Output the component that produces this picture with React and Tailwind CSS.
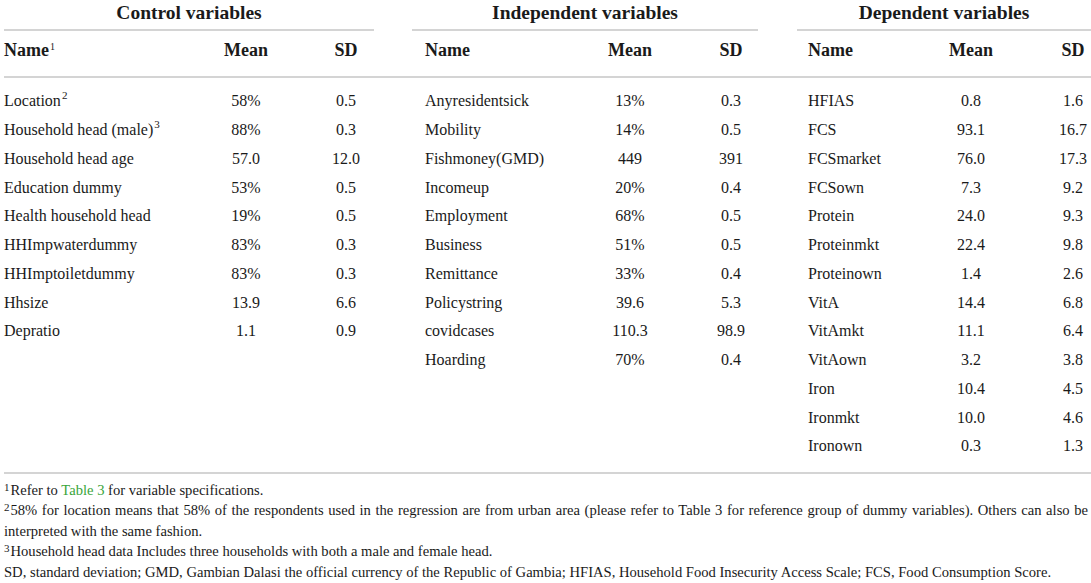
import React from "react";

const control = [
  ["Location", "58%", "0.5", "2"],
  ["Household head (male)", "88%", "0.3", "3"],
  ["Household head age", "57.0", "12.0"],
  ["Education dummy", "53%", "0.5"],
  ["Health household head", "19%", "0.5"],
  ["HHImpwaterdummy", "83%", "0.3"],
  ["HHImptoiletdummy", "83%", "0.3"],
  ["Hhsize", "13.9", "6.6"],
  ["Depratio", "1.1", "0.9"],
];

const independent = [
  ["Anyresidentsick", "13%", "0.3"],
  ["Mobility", "14%", "0.5"],
  ["Fishmoney(GMD)", "449", "391"],
  ["Incomeup", "20%", "0.4"],
  ["Employment", "68%", "0.5"],
  ["Business", "51%", "0.5"],
  ["Remittance", "33%", "0.4"],
  ["Policystring", "39.6", "5.3"],
  ["covidcases", "110.3", "98.9"],
  ["Hoarding", "70%", "0.4"],
];

const dependent = [
  ["HFIAS", "0.8", "1.6"],
  ["FCS", "93.1", "16.7"],
  ["FCSmarket", "76.0", "17.3"],
  ["FCSown", "7.3", "9.2"],
  ["Protein", "24.0", "9.3"],
  ["Proteinmkt", "22.4", "9.8"],
  ["Proteinown", "1.4", "2.6"],
  ["VitA", "14.4", "6.8"],
  ["VitAmkt", "11.1", "6.4"],
  ["VitAown", "3.2", "3.8"],
  ["Iron", "10.4", "4.5"],
  ["Ironmkt", "10.0", "4.6"],
  ["Ironown", "0.3", "1.3"],
];

const GRID =
  "grid grid-cols-[192px_100px_100px_184px_100px_102px_139px_100px_70px]";

function Group({ row, namePad, lastSd }) {
  const name = row ? row[0] : "";
  const sup = row ? row[3] : null;
  return (
    <>
      <div className={`h-[28.75px] flex items-center whitespace-nowrap ${namePad}`}>
        {name}
        {sup && <sup className="text-[11px] -top-[6px] ml-[1px]">{sup}</sup>}
      </div>
      <div className="h-[28.75px] flex items-center justify-center">{row ? row[1] : ""}</div>
      <div className={`h-[28.75px] flex items-center justify-center ${lastSd ? "pl-[34px]" : ""}`}>
        {row ? row[2] : ""}
      </div>
    </>
  );
}

export default function App() {
  const rows = Array.from({ length: 13 }, (_, i) => i);
  return (
    <div
      className="w-[1091px] h-[583px] bg-white text-[#1a1a1a] overflow-hidden"
      style={{ fontFamily: '"Liberation Serif", "Times New Roman", serif' }}
    >
      {/* group titles */}
      <div className="flex pl-[4px] text-[19.5px] font-bold">
        <div className="w-[370px] h-[31px] border-b-2 border-[#d4d4d4] text-center leading-[26px]">
          Control variables
        </div>
        <div className="ml-[38px] w-[346px] h-[31px] border-b-2 border-[#d4d4d4] text-center leading-[26px]">
          Independent variables
        </div>
        <div className="ml-[39px] w-[294px] h-[31px] border-b-2 border-[#d4d4d4] text-center leading-[26px]">
          Dependent variables
        </div>
      </div>

      {/* header row */}
      <div className="ml-[4px] border-b-2 border-[#d4d4d4]">
        <div className={`${GRID} h-[45px] pt-[7px] text-[18px] font-bold leading-[24px]`}>
          <div>
            Name<sup className="text-[10px] font-normal -top-[6px] ml-[1px]">1</sup>
          </div>
          <div className="text-center">Mean</div>
          <div className="text-center">SD</div>
          <div className="pl-[29px]">Name</div>
          <div className="text-center">Mean</div>
          <div className="text-center">SD</div>
          <div className="pl-[26px]">Name</div>
          <div className="text-center">Mean</div>
          <div className="pl-[34px] text-center">SD</div>
        </div>
      </div>

      {/* body */}
      <div className="ml-[4px] border-b-2 border-[#d4d4d4] pt-[9px] pb-[11px]">
        <div className={`${GRID} text-[16px]`}>
          {rows.map((i) => (
            <React.Fragment key={i}>
              <Group row={control[i]} namePad="" />
              <Group row={independent[i]} namePad="pl-[29px]" />
              <Group row={dependent[i]} namePad="pl-[26px]" lastSd />
            </React.Fragment>
          ))}
        </div>
      </div>

      {/* footnotes */}
      <div className="pl-[4px] pr-[3px] pt-[6px] text-[14.6px] leading-[20.5px] text-justify">
        <p>
          <sup className="text-[11px] -top-[4px] mr-[1px]">1</sup>Refer to{" "}
          <span className="text-[#3aa53a]">Table 3</span> for variable specifications.
        </p>
        <p>
          <sup className="text-[11px] -top-[4px] mr-[1px]">2</sup>58% for location means that 58% of
          the respondents used in the regression are from urban area (please refer to Table 3 for
          reference group of dummy variables). Others can also be interpreted with the same fashion.
        </p>
        <p>
          <sup className="text-[11px] -top-[4px] mr-[1px]">3</sup>Household head data Includes three
          households with both a male and female head.
        </p>
        <p>
          SD, standard deviation; GMD, Gambian Dalasi the official currency of the Republic of
          Gambia; HFIAS, Household Food Insecurity Access Scale; FCS, Food Consumption Score.
        </p>
      </div>
    </div>
  );
}
